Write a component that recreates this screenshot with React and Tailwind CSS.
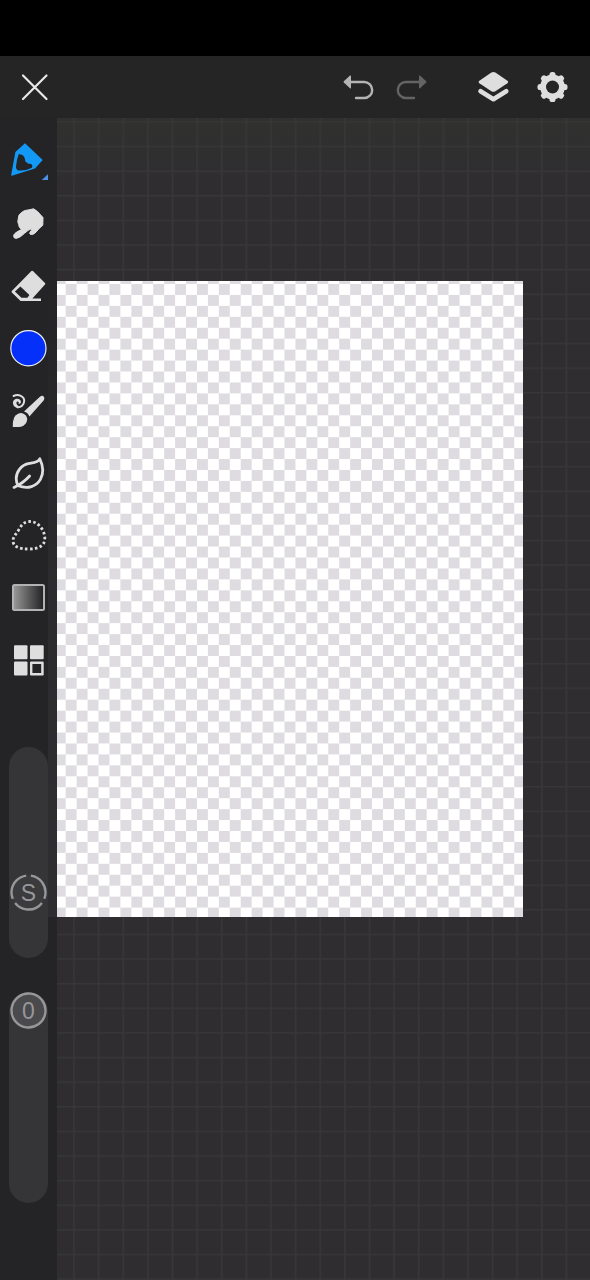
import { useState } from "react"

const PenIcon = () => (
  <>
    <path
      fill="#1199f5"
      fillRule="evenodd"
      d="M25 12.3 42.7 29 35 37.6 11.8 44.8Q11 44.8 11.2 43.8L15.4 21ZM18.8 23Q16.8 28 16 35.5 15.9 38.8 18.4 39.4 26 40 32 36.8 33 34.6 31.4 33 28.2 33.4 25.4 30.4 24.6 24.6 21.8 23.8Z"
    />
    <path fill="#4a92ea" d="M48 43.3V49H41.7Z" />
  </>
)

const SmudgeIcon = () => (
  <path
    fill="#dededf"
    stroke="#dededf"
    strokeWidth="1"
    strokeLinejoin="round"
    d="M33.6 14.8 37.6 17.6 43 23.6 42.8 31.2Q38.6 34.6 36 38.2 33.2 41.2 30.4 40.4 29.2 39.4 30 38.2 31.6 36.8 31.8 34.6 28 36 24.6 39.2 20.6 43.4 16.4 44.4 13.4 44.6 13.6 41.4 14.4 38.8 21.4 35.6 18.6 33.2 18.6 30.4 17.2 28 18.2 25 18.2 20.6 21.4 18.6 24.4 15.8 28 16Z"
  />
)

const EraserIcon = () => (
  <>
    <path
      fill="#dededf"
      fillRule="evenodd"
      d="M31.4 15.1Q32.3 14.4 33.2 15.2L45 27Q45.7 27.8 45 28.6L32.4 42.4H41V45H20.6L11.8 36.4Q11.2 35.6 11.8 35ZM20.4 30.6 14.9 35.6 21.4 41.8H27.4L29.4 39Z"
    />
  </>
)

const ColorIcon = () => <circle cx="28.4" cy="29.2" r="17.6" fill="#0530fa" stroke="#f1f1f3" strokeWidth="1.2" />

const BrushIcon = () => (
  <>
    <path fill="#dededf" d="M24 30.6 40.2 15.4Q42.6 14 44 15.9 45 17.8 43.6 19.6L29.4 35.6Q28 31.8 24 30.6Z" />
    <path fill="#dededf" d="M12.8 46Q12.6 40 14.2 36.6 16.6 32 21.6 32 27 33.4 27.2 38.6 26.6 43.8 21.8 45.4 18.6 46.4 12.8 46Z" />
    <path
      fill="none"
      stroke="#dededf"
      strokeWidth="2"
      strokeLinecap="round"
      d="M13.6 15C18.4 12.4 24.4 15.4 24.2 20 24 24 20.8 26.4 17.6 26.2"
    />
    <path fill="#dededf" d="M13 22.6C12.4 18.6 17.2 16.4 20 18.8 22 20.8 20.6 23.4 18.4 22.8 19.2 21.6 18.8 20.4 17.4 20.4 15.8 20.8 16.2 23.4 18.4 24.8L18 27.2C15 26.8 13.2 25 13 22.6Z" />
  </>
)

const LeafIcon = () => (
  <g fill="none" stroke="#dededf" strokeWidth="2.8" strokeLinecap="round" strokeLinejoin="round">
    <path d="M39.8 15.8C38 19.4 34 19.6 29.4 20.4 20.4 22 16.2 29.4 16.2 35.6 16.2 38 16.8 40.6 18.2 42.8 28 46.4 36.4 43.4 40.4 36.4 44.4 29 42.6 21.6 39.8 15.8Z" />
    <path d="M14 44.4C20 41.6 24.6 38.6 29.6 33" />
  </g>
)

const LassoIcon = () => (
  <path
    fill="none"
    stroke="#dededf"
    strokeWidth="2.8"
    pathLength="100"
    strokeDasharray="2.7 2.56"
    d="M28.4 15.6C37 14.4 44.8 23.4 44.8 32.4 44.8 39.4 39.4 43 29 43 19 43 13 40.4 13 35 13 30.4 16.4 28 19 23.4 21.6 18.8 24 16.2 28.4 15.6Z"
  />
)

const GradientIcon = () => (
  <>
    <linearGradient id="tool-gradient">
      <stop offset="0" stopColor="#9a9a9a" />
      <stop offset="1" stopColor="#1f1f21" />
    </linearGradient>
    <rect x="13" y="17" width="31" height="25" rx="1.5" fill="url(#tool-gradient)" stroke="#b2b2b4" strokeWidth="2" />
  </>
)

const GridIcon = () => (
  <g fill="#dededf">
    <rect x="14" y="14.2" width="13.5" height="14" rx="1" />
    <rect x="30" y="14.2" width="13.7" height="14" rx="1" />
    <rect x="14" y="30.5" width="13.5" height="14" rx="1" />
    <path fillRule="evenodd" d="M31 30.5H42.7Q43.7 30.5 43.7 31.5V43.5Q43.7 44.5 42.7 44.5H31Q30 44.5 30 43.5V31.5Q30 30.5 31 30.5ZM32.4 32.9V41.9H41.2V32.9Z" />
  </g>
)

const TOOLS = [
  { id: "pen", label: "Pen", Icon: PenIcon },
  { id: "smudge", label: "Smudge", Icon: SmudgeIcon },
  { id: "eraser", label: "Eraser", Icon: EraserIcon },
  { id: "color", label: "Color", Icon: ColorIcon },
  { id: "brush", label: "Brushes", Icon: BrushIcon },
  { id: "leaf", label: "Nature", Icon: LeafIcon },
  { id: "lasso", label: "Lasso", Icon: LassoIcon },
  { id: "gradient", label: "Gradient", Icon: GradientIcon },
  { id: "more", label: "More tools", Icon: GridIcon },
]

function UndoIcon() {
  return (
    <svg viewBox="0 0 32 32" className="h-8 w-8">
      <path fill="currentColor" d="M.8 10.3 7 4.6Q8 4 8 5.2V16.6Q8 18 7 17.2L.8 11.6Q.2 11 .8 10.3Z" />
      <path fill="none" stroke="currentColor" strokeWidth="2.4" strokeLinecap="round" d="M8 11H21.2A8 8 0 0 1 21.2 27H13" />
    </svg>
  )
}

function LayersIcon() {
  return (
    <svg viewBox="0 0 32 32" className="h-8 w-8">
      <path fill="currentColor" d="M13.4 1.6Q15.4 .6 17.4 1.6L29.4 9.8Q31 11 29.4 12.2L17.4 20.2Q15.4 21.2 13.4 20.2L1.4 12.2Q-.2 11 1.4 9.8Z" />
      <path fill="none" stroke="currentColor" strokeWidth="4.6" strokeLinecap="round" strokeLinejoin="round" d="M2.6 20.2 15.4 28.2 28.2 20.2" />
    </svg>
  )
}

function GearIcon() {
  return (
    <svg viewBox="-15.5 -16 32 32" className="h-8 w-8">
      <mask id="gear-hole">
        <rect x="-16" y="-16" width="32" height="32" fill="white" />
        <circle r="6.5" fill="black" />
      </mask>
      <g fill="currentColor" mask="url(#gear-hole)">
        <circle r="12.4" />
        {[0, 45, 90, 135].map((angle) => (
          <rect key={angle} x="-3" y="-15" width="6" height="30" rx="2.6" transform={`rotate(${angle})`} />
        ))}
      </g>
    </svg>
  )
}

function TopBar({ onClose }) {
  return (
    <header className="flex h-[62px] items-center bg-[#252526] pr-2 text-[#dededf]">
      <button type="button" aria-label="Close" onClick={onClose} className="flex h-full w-[70px] items-center justify-center">
        <svg viewBox="0 0 32 32" className="h-8 w-8">
          <path stroke="#e8e8e8" strokeWidth="2.2" strokeLinecap="round" d="M4 4.5 27.5 28M27.5 4.5 4 28" />
        </svg>
      </button>
      <div className="mr-[27px] ml-auto flex h-full">
        <button type="button" aria-label="Undo" className="flex w-[52px] items-center justify-center text-[#b4b4b5]">
          <UndoIcon />
        </button>
        <button type="button" aria-label="Redo" disabled className="flex w-[52px] -scale-x-100 items-center justify-center text-[#646465]">
          <UndoIcon />
        </button>
      </div>
      <button type="button" aria-label="Layers" className="flex h-full w-[59px] items-center justify-center">
        <LayersIcon />
      </button>
      <button type="button" aria-label="Settings" className="flex h-full w-[59px] items-center justify-center">
        <GearIcon />
      </button>
    </header>
  )
}

function VerticalSlider({ label, letter, value, onChange, dashed }) {
  return (
    <label className="relative block h-[211px] w-[39px] rounded-full bg-[#353537]">
      <input
        type="range"
        aria-label={label}
        min="0"
        max="100"
        value={value}
        onChange={(e) => onChange(Number(e.target.value))}
        className="absolute inset-0 h-full w-full cursor-pointer opacity-0 [direction:rtl] [writing-mode:vertical-lr]"
      />
      <span
        className="pointer-events-none absolute inset-x-px flex h-[37px] items-center justify-center"
        style={{ bottom: `calc((100% - 37px) * ${value / 100})` }}
      >
        <svg viewBox="0 0 37 37" className="absolute inset-0 h-full w-full">
          <circle
            cx="18.5"
            cy="18.5"
            r="17"
            fill={dashed ? "#3b3b3d" : "#4a4a4c"}
            stroke="#97979a"
            strokeWidth="2.4"
            pathLength="360"
            strokeDasharray={dashed ? "104 16" : undefined}
            transform="rotate(-82 18.5 18.5)"
          />
        </svg>
        <span className="relative font-['Liberation_Sans',sans-serif] text-[23px] leading-6 text-[#97979a]">{letter}</span>
      </span>
    </label>
  )
}

function Sidebar() {
  const [tool, setTool] = useState("pen")
  const [size, setSize] = useState(27)
  const [opacity, setOpacity] = useState(100)

  return (
    <aside className="relative flex w-[57px] shrink-0 flex-col items-center bg-[#242426] pt-3 pb-[77px]">
      <div className="absolute top-[163px] right-0 h-[636px] w-[9px] bg-linear-to-b from-[#242426] via-[#2c2c2e] to-[#2e2e30]" />
      <nav className="relative flex h-[562px] w-full flex-col">
        {TOOLS.map(({ id, label, Icon }) => (
          <button
            key={id}
            type="button"
            aria-label={label}
            aria-pressed={tool === id}
            onClick={() => setTool(id)}
            className="flex flex-1 items-center justify-center"
          >
            <svg viewBox="0 0 57 60" className="h-[60px] w-[57px]">
              <Icon />
            </svg>
          </button>
        ))}
      </nav>
      <div className="mt-[55px] flex flex-col gap-[34px]">
        <VerticalSlider label="Brush size" letter="S" value={size} onChange={setSize} dashed />
        <VerticalSlider label="Opacity" letter="0" value={opacity} onChange={setOpacity} />
      </div>
    </aside>
  )
}

function Paper() {
  return (
    <div className="relative mt-[163px] mr-[67px] aspect-[466/636] bg-white">
      <svg className="block h-full w-full" shapeRendering="crispEdges">
        <pattern id="checker" x="8.7" y="3" width="21.88" height="21.88" patternUnits="userSpaceOnUse">
          <path fill="#dedce0" d="M0 0H10.94V10.94H0ZM10.94 10.94H21.88V21.88H10.94Z" />
        </pattern>
        <rect width="100%" height="100%" fill="url(#checker)" />
      </svg>
    </div>
  )
}

function Workspace() {
  return (
    <main className="relative flex-1 bg-[#2f2d30]">
      <div className="absolute inset-x-0 top-0 h-16 bg-linear-to-b from-[#30312f] to-[#2f2d30]" />
      <svg className="absolute inset-0 h-full w-full">
        <pattern id="grid" x="16.2" y="3.2" width="24.62" height="24.62" patternUnits="userSpaceOnUse">
          <path fill="#373638" d="M0 0H24.62V1.6H1.6V24.62H0Z" />
        </pattern>
        <rect width="100%" height="100%" fill="url(#grid)" />
      </svg>
      <Paper />
    </main>
  )
}

export default function App() {
  return (
    <div className="flex min-h-screen flex-col bg-[#252526]">
      <div className="h-14 bg-black" />
      <TopBar />
      <div className="flex flex-1">
        <Sidebar />
        <Workspace />
      </div>
    </div>
  )
}
